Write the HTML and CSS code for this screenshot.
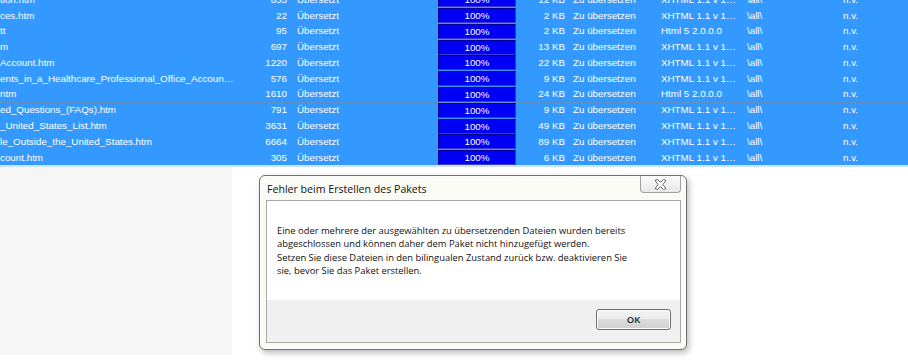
FILE: index.html
```html
<!DOCTYPE html>
<html lang="de">
<head>
<meta charset="utf-8">
<title>Fehler beim Erstellen des Pakets</title>
<link rel="stylesheet" href="styles.css">
</head>
<body>
<div class="screen">
  <div class="list">
    <div class="row"><span class="c name">tion.htm</span><span class="c num">835</span><span class="c st">Übersetzt</span><span class="c prog"><span class="bar">100%</span></span><span class="c size">12 KB</span><span class="c st2">Zu übersetzen</span><span class="c fmt">XHTML 1.1 v 1…</span><span class="c path">\all\</span><span class="c nv">n.v.</span></div>
    <div class="row"><span class="c name">ces.htm</span><span class="c num">22</span><span class="c st">Übersetzt</span><span class="c prog"><span class="bar">100%</span></span><span class="c size">2 KB</span><span class="c st2">Zu übersetzen</span><span class="c fmt">XHTML 1.1 v 1…</span><span class="c path">\all\</span><span class="c nv">n.v.</span></div>
    <div class="row"><span class="c name">tt</span><span class="c num">95</span><span class="c st">Übersetzt</span><span class="c prog"><span class="bar">100%</span></span><span class="c size">2 KB</span><span class="c st2">Zu übersetzen</span><span class="c fmt">Html 5 2.0.0.0</span><span class="c path">\all\</span><span class="c nv">n.v.</span></div>
    <div class="row"><span class="c name">m</span><span class="c num">697</span><span class="c st">Übersetzt</span><span class="c prog"><span class="bar">100%</span></span><span class="c size">13 KB</span><span class="c st2">Zu übersetzen</span><span class="c fmt">XHTML 1.1 v 1…</span><span class="c path">\all\</span><span class="c nv">n.v.</span></div>
    <div class="row"><span class="c name">Account.htm</span><span class="c num">1220</span><span class="c st">Übersetzt</span><span class="c prog"><span class="bar">100%</span></span><span class="c size">22 KB</span><span class="c st2">Zu übersetzen</span><span class="c fmt">XHTML 1.1 v 1…</span><span class="c path">\all\</span><span class="c nv">n.v.</span></div>
    <div class="row"><span class="c name">ents_in_a_Healthcare_Professional_Office_Accoun…</span><span class="c num">576</span><span class="c st">Übersetzt</span><span class="c prog"><span class="bar">100%</span></span><span class="c size">9 KB</span><span class="c st2">Zu übersetzen</span><span class="c fmt">XHTML 1.1 v 1…</span><span class="c path">\all\</span><span class="c nv">n.v.</span></div>
    <div class="row"><span class="c name">ntm</span><span class="c num">1610</span><span class="c st">Übersetzt</span><span class="c prog"><span class="bar">100%</span></span><span class="c size">24 KB</span><span class="c st2">Zu übersetzen</span><span class="c fmt">Html 5 2.0.0.0</span><span class="c path">\all\</span><span class="c nv">n.v.</span></div>
    <div class="row focus"><span class="c name">ed_Questions_(FAQs).htm</span><span class="c num">791</span><span class="c st">Übersetzt</span><span class="c prog"><span class="bar">100%</span></span><span class="c size">9 KB</span><span class="c st2">Zu übersetzen</span><span class="c fmt">XHTML 1.1 v 1…</span><span class="c path">\all\</span><span class="c nv">n.v.</span></div>
    <div class="row"><span class="c name">_United_States_List.htm</span><span class="c num">3631</span><span class="c st">Übersetzt</span><span class="c prog"><span class="bar">100%</span></span><span class="c size">49 KB</span><span class="c st2">Zu übersetzen</span><span class="c fmt">XHTML 1.1 v 1…</span><span class="c path">\all\</span><span class="c nv">n.v.</span></div>
    <div class="row"><span class="c name">le_Outside_the_United_States.htm</span><span class="c num">6664</span><span class="c st">Übersetzt</span><span class="c prog"><span class="bar">100%</span></span><span class="c size">89 KB</span><span class="c st2">Zu übersetzen</span><span class="c fmt">XHTML 1.1 v 1…</span><span class="c path">\all\</span><span class="c nv">n.v.</span></div>
    <div class="row"><span class="c name">count.htm</span><span class="c num">305</span><span class="c st">Übersetzt</span><span class="c prog"><span class="bar">100%</span></span><span class="c size">6 KB</span><span class="c st2">Zu übersetzen</span><span class="c fmt">XHTML 1.1 v 1…</span><span class="c path">\all\</span><span class="c nv">n.v.</span></div>
  </div>
  <div class="sep"></div>
  <div class="lower">
    <div class="pane"></div>
    <div class="rest"></div>
  </div>

  <div class="dialog">
    <div class="titlebar"><span class="title">Fehler beim Erstellen des Pakets</span></div>
    <button class="close" type="button" aria-label="Schließen">
      <svg width="13" height="11" viewBox="0 0 13 11"><path d="M1 1.4 L3.4 0.5 L6.5 3.3 L9.6 0.5 L12 1.4 L8.9 5.5 L12 9.6 L9.6 10.5 L6.5 7.7 L3.4 10.5 L1 9.6 L4.1 5.5 Z" fill="#fdfdfd" stroke="#666666" stroke-width="1" stroke-linejoin="round"/></svg>
    </button>
    <div class="client">
      <div class="message">Eine oder mehrere der ausgewählten zu übersetzenden Dateien wurden bereits<br>abgeschlossen und können daher dem Paket nicht hinzugefügt werden.<br>Setzen Sie diese Dateien in den bilingualen Zustand zurück bzw. deaktivieren Sie<br>sie, bevor Sie das Paket erstellen.</div>
      <div class="buttons"><button class="ok" type="button">OK</button></div>
    </div>
  </div>
</div>
</body>
</html>
```
FILE: styles.css
```css
* { box-sizing: border-box; }
html, body { margin: 0; padding: 0; }
body {
  width: 908px;
  height: 360px;
  overflow: hidden;
  background: #ffffff;
}
.screen {
  position: relative;
  width: 908px;
  height: 360px;
  overflow: hidden;
  display: flex;
  flex-direction: column;
}
.list {
  margin-top: -8.3px;
  background: #3399ff;
  font-family: "Liberation Sans", Arial, sans-serif;
  font-size: 9.8px;
  color: #ffffff;
}
.row {
  display: grid;
  grid-template-columns: 235px 55px 146px 82px 50px 90px 86px 96px 1fr;
  height: 15.8px;
  align-items: center;
  white-space: nowrap;
}
.row.focus {
  box-shadow: inset 0 1px 0 #5f8fbf, inset 0 -1px 0 #5f8fbf;
}
.c { overflow: hidden; line-height: 15.8px; }
.name { padding-left: 0; }
.num { text-align: right; padding-right: 3px; }
.st { padding-left: 7px; }
.prog {
  height: 15.8px;
  padding: 0.6px 2px 0 2px;
  display: flex;
}
.bar {
  flex: 1;
  height: 15px;
  background: #0000f4;
  border: 1px solid #00008c;
  border-right-color: #3a3ad0;
  border-bottom-color: #3a3ad0;
  text-align: center;
  line-height: 13px;
  color: #ffffff;
}
.size { text-align: right; padding-right: 3px; }
.st2 { padding-left: 5px; }
.fmt { padding-left: 3px; }
.path { padding-left: 3px; }
.nv { padding-left: 3px; }

.sep {
  height: 2px;
  background: #cde4fa;
}
.lower {
  flex: 1;
  display: flex;
}
.pane {
  width: 232px;
  height: 188px;
  background: #f6f6f6;
}
.rest { flex: 1; background: #ffffff; }

.dialog {
  position: absolute;
  left: 259px;
  top: 175px;
  width: 428px;
  height: 175px;
  background: #fbfbf6;
  border: 1px solid #6f6f6f;
  border-radius: 6px;
  box-shadow: 2px 3px 6px rgba(0,0,0,0.28), inset 0 0 0 1px #ffffff;
  padding: 0 5px 6px 6px;
  display: flex;
  flex-direction: column;
  font-family: "Open Sans", "Noto Sans", sans-serif;
}
.titlebar {
  height: 24px;
  display: flex;
  align-items: center;
  padding-left: 1px;
  padding-top: 1px;
}
.title {
  font-size: 10.6px;
  color: #111111;
}
.close {
  position: absolute;
  top: 0;
  right: 5px;
  width: 41px;
  height: 17px;
  margin: 0;
  padding: 0;
  border: 1px solid #a2a2a2;
  border-top: none;
  border-radius: 0 0 4px 4px;
  background: linear-gradient(#fafafa, #e9e9e9);
  display: flex;
  align-items: center;
  justify-content: center;
}
.close svg { display: block; }
.client {
  flex: 1;
  border: 1px solid #a9a9a9;
  background: #f0f0f0;
  display: flex;
  flex-direction: column;
}
.message {
  height: 99px;
  background: #ffffff;
  padding: 23px 10px 0 10px;
  font-size: 9.4px;
  line-height: 13.4px;
  color: #111111;
  white-space: nowrap;
}
.buttons {
  flex: 1;
  display: flex;
  justify-content: flex-end;
  padding: 9px 9px 0 0;
}
.ok {
  width: 75px;
  height: 21px;
  margin: 0;
  padding: 0;
  border: 1px solid #707070;
  border-radius: 3px;
  background: linear-gradient(#f3f3f3 0%, #ebebeb 45%, #dddddd 50%, #cfcfcf 100%);
  box-shadow: inset 0 0 0 1px #fbfbfb;
  font-family: "Open Sans", "Noto Sans", sans-serif;
  font-size: 9.5px;
  font-weight: 600;
  color: #222222;
}
```
